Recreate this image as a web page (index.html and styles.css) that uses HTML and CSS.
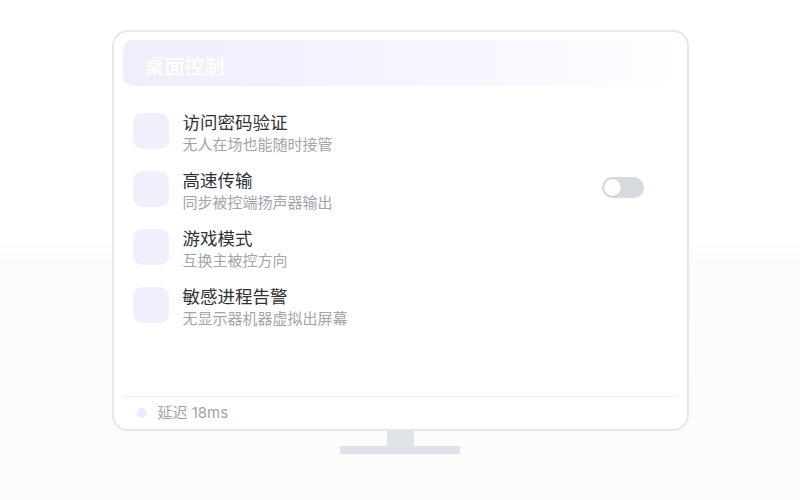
FILE: index.html
```html
<!DOCTYPE html>
<html lang="zh-CN">
<head>
<meta charset="utf-8">
<link rel="stylesheet" href="styles.css">
</head>
<body>
<div class="scene">
  <div class="monitor">
    <div class="screen-head">桌面控制</div>
    <div class="list">
      <div class="row">
        <div class="icon"></div>
        <div class="text">
          <div class="title">访问密码验证</div>
          <div class="sub">无人在场也能随时接管</div>
        </div>
      </div>
      <div class="row">
        <div class="icon"></div>
        <div class="text">
          <div class="title">高速传输</div>
          <div class="sub">同步被控端扬声器输出</div>
        </div>
        <div class="toggle"><span class="knob"></span></div>
      </div>
      <div class="row">
        <div class="icon"></div>
        <div class="text">
          <div class="title">游戏模式</div>
          <div class="sub">互换主被控方向</div>
        </div>
      </div>
      <div class="row">
        <div class="icon"></div>
        <div class="text">
          <div class="title">敏感进程告警</div>
          <div class="sub">无显示器机器虚拟出屏幕</div>
        </div>
      </div>
    </div>
    <div class="footer"><span class="dot"></span><span class="latency">延迟 18ms</span></div>
  </div>
  <div class="neck"></div>
  <div class="base"></div>
</div>
</body>
</html>
```

FILE: styles.css
```css
html, body {
  margin: 0;
  padding: 0;
}
body {
  width: 800px;
  height: 500px;
  overflow: hidden;
  background: linear-gradient(180deg, #ffffff 0, #ffffff 240px, #fbfbfc 262px, #fcfcfd 500px);
  font-family: "Inter", "Noto Sans CJK SC", sans-serif;
}
.scene {
  display: flex;
  flex-direction: column;
  align-items: center;
  padding-top: 30px;
}
.monitor {
  box-sizing: border-box;
  width: 577px;
  height: 401px;
  border: 2px solid #e4e7eb;
  border-radius: 16px;
  background: #ffffff;
  padding: 8px 9px 6px 9px;
  display: flex;
  flex-direction: column;
}
.screen-head {
  box-sizing: border-box;
  height: 46px;
  border-radius: 10px;
  background: linear-gradient(90deg, #f0edfc 0%, #f5f3fe 45%, #fbfaff 85%, #ffffff 100%);
  color: #ffffff;
  font-family: "Noto Sans CJK SC", sans-serif;
  font-size: 20px;
  font-weight: 500;
  display: flex;
  align-items: center;
  padding: 4px 0 0 22px;
}
.list {
  flex: 1;
  display: flex;
  flex-direction: column;
  gap: 18px;
  padding: 27px 34px 0 10px;
}
.row {
  display: flex;
  align-items: flex-start;
}
.icon {
  width: 36px;
  height: 36px;
  border-radius: 9px;
  background: #f2effd;
  flex: none;
}
.text {
  margin-left: 14px;
  font-family: "Noto Sans CJK SC", sans-serif;
}
.title {
  font-size: 17.5px;
  line-height: 18px;
  color: #2f3237;
  margin-bottom: 4px;
}
.sub {
  font-size: 15px;
  line-height: 18px;
  color: #a1a5ac;
}
.toggle {
  margin-left: auto;
  margin-top: 6px;
  width: 42px;
  height: 21px;
  border-radius: 11px;
  background: #d6d9de;
  display: flex;
  align-items: center;
  padding-left: 2px;
  box-sizing: border-box;
}
.knob {
  width: 17px;
  height: 17px;
  border-radius: 50%;
  background: #ffffff;
  box-shadow: 0 0 1px rgba(0,0,0,0.2);
}
.footer {
  border-top: 1px solid #eceef1;
  padding: 6px 0 0 14px;
  display: flex;
  align-items: center;
  height: 20px;
}
.dot {
  width: 10px;
  height: 10px;
  border-radius: 50%;
  background: #efebfd;
  margin-right: 11px;
}
.latency {
  font-size: 15px;
  line-height: 20px;
  color: #9ea3aa;
}
.neck {
  width: 27px;
  height: 15px;
  background: #dfe3e8;
}
.base {
  width: 120px;
  height: 8px;
  background: #dfe3e8;
}
```
